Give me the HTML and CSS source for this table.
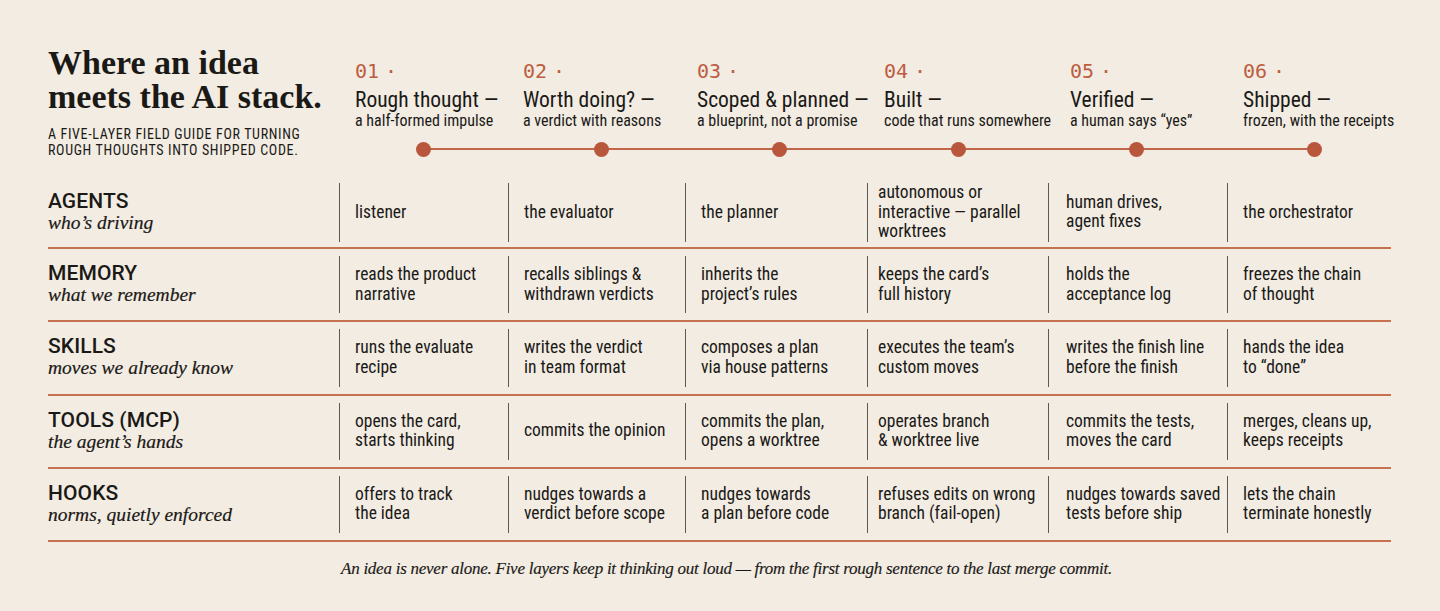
FILE: index.html
```html
<!DOCTYPE html>
<html lang="en">
<head>
<meta charset="utf-8">
<title>Where an idea meets the AI stack</title>
<link rel="stylesheet" href="styles.css">
</head>
<body>
<main class="page">
  <header class="top">
    <div class="intro">
      <h1 class="title">Where an idea<br>meets the AI stack.</h1>
      <p class="subtitle">A five-layer field guide for turning<br>rough thoughts into shipped code.</p>
    </div>
    <div class="stages-wrap">
      <div class="stages">
        <div class="stage"><div class="num">01 ·</div><div class="stage-title">Rough thought —</div><div class="stage-sub">a half-formed impulse</div></div>
        <div class="stage"><div class="num">02 ·</div><div class="stage-title">Worth doing? —</div><div class="stage-sub">a verdict with reasons</div></div>
        <div class="stage"><div class="num">03 ·</div><div class="stage-title">Scoped &amp; planned —</div><div class="stage-sub">a blueprint, not a promise</div></div>
        <div class="stage"><div class="num">04 ·</div><div class="stage-title">Built —</div><div class="stage-sub">code that runs somewhere</div></div>
        <div class="stage"><div class="num">05 ·</div><div class="stage-title">Verified —</div><div class="stage-sub">a human says “yes”</div></div>
        <div class="stage"><div class="num">06 ·</div><div class="stage-title">Shipped —</div><div class="stage-sub">frozen, with the receipts</div></div>
      </div>
      <div class="timeline">
        <span class="dot"></span><span class="dot"></span><span class="dot"></span><span class="dot"></span><span class="dot"></span><span class="dot"></span>
      </div>
    </div>
  </header>

  <section class="table">
    <div class="row">
      <div class="label"><div class="label-name">AGENTS</div><div class="label-sub">who’s driving</div></div>
      <div class="cell">listener</div>
      <div class="cell">the evaluator</div>
      <div class="cell">the planner</div>
      <div class="cell c4">autonomous or<br>interactive — parallel<br>worktrees</div>
      <div class="cell c5">human drives,<br>agent fixes</div>
      <div class="cell">the orchestrator</div>
    </div>
    <div class="row">
      <div class="label"><div class="label-name">MEMORY</div><div class="label-sub">what we remember</div></div>
      <div class="cell">reads the product<br>narrative</div>
      <div class="cell">recalls siblings &amp;<br>withdrawn verdicts</div>
      <div class="cell">inherits the<br>project’s rules</div>
      <div class="cell c4">keeps the card’s<br>full history</div>
      <div class="cell c5">holds the<br>acceptance log</div>
      <div class="cell">freezes the chain<br>of thought</div>
    </div>
    <div class="row">
      <div class="label"><div class="label-name">SKILLS</div><div class="label-sub">moves we already know</div></div>
      <div class="cell">runs the evaluate<br>recipe</div>
      <div class="cell">writes the verdict<br>in team format</div>
      <div class="cell">composes a plan<br>via house patterns</div>
      <div class="cell c4">executes the team’s<br>custom moves</div>
      <div class="cell c5">writes the finish line<br>before the finish</div>
      <div class="cell">hands the idea<br>to “done”</div>
    </div>
    <div class="row">
      <div class="label"><div class="label-name">TOOLS (MCP)</div><div class="label-sub">the agent’s hands</div></div>
      <div class="cell">opens the card,<br>starts thinking</div>
      <div class="cell">commits the opinion</div>
      <div class="cell">commits the plan,<br>opens a worktree</div>
      <div class="cell c4">operates branch<br>&amp; worktree live</div>
      <div class="cell c5">commits the tests,<br>moves the card</div>
      <div class="cell">merges, cleans up,<br>keeps receipts</div>
    </div>
    <div class="row">
      <div class="label"><div class="label-name">HOOKS</div><div class="label-sub">norms, quietly enforced</div></div>
      <div class="cell">offers to track<br>the idea</div>
      <div class="cell">nudges towards a<br>verdict before scope</div>
      <div class="cell">nudges towards<br>a plan before code</div>
      <div class="cell c4">refuses edits on wrong<br>branch (fail-open)</div>
      <div class="cell c5">nudges towards saved<br>tests before ship</div>
      <div class="cell">lets the chain<br>terminate honestly</div>
    </div>
  </section>

  <p class="footer">An idea is never alone. Five layers keep it thinking out loud — from the first rough sentence to the last merge commit.</p>
</main>
</body>
</html>
```

FILE: styles.css
```css
* { box-sizing: border-box; }

html, body {
  margin: 0;
  padding: 0;
  background: #f2ece3;
  color: #1b1916;
}

body {
  font-family: "Roboto Condensed", "Roboto", "Liberation Sans", sans-serif;
  font-stretch: condensed;
  width: 1440px;
  height: 611px;
  overflow: hidden;
}

.page {
  padding: 46px 49px 0 48px;
}

.top {
  display: grid;
  grid-template-columns: 307px 1fr;
}

.title {
  margin: 0;
  font-family: "Liberation Serif", "Times New Roman", serif;
  font-weight: 700;
  font-size: 34px;
  line-height: 34px;
  letter-spacing: 0;
  font-stretch: normal;
}

.subtitle {
  margin: 13px 0 0;
  font-size: 14px;
  line-height: 15.5px;
  text-transform: uppercase;
  letter-spacing: 0.65px;
}

.stages-wrap {
  padding-top: 13px;
}

.stages {
  display: grid;
  grid-template-columns: 168px 174px 187px 186px 173px 1fr;
}

.num {
  font-family: "DejaVu Sans Mono", "Liberation Mono", monospace;
  font-stretch: normal;
  font-size: 20px;
  line-height: 24px;
  word-spacing: -6px;
  color: #bd5d41;
}

.stage-title {
  margin-top: 6px;
  font-size: 21.5px;
  line-height: 22px;
  white-space: nowrap;
}

.stage-sub {
  font-size: 16px;
  line-height: 19px;
  white-space: nowrap;
}

.timeline {
  position: relative;
  display: flex;
  justify-content: space-between;
  width: 906px;
  margin: 12px 0 0 61px;
}

.timeline::before {
  content: "";
  position: absolute;
  left: 7px;
  right: 7px;
  top: 6px;
  height: 2px;
  background: #c0664b;
}

.dot {
  position: relative;
  width: 15px;
  height: 15px;
  border-radius: 50%;
  background: #b9573c;
}

.table {
  margin-top: 18px;
  width: 1343px;
}

.row {
  display: grid;
  grid-template-columns: 291px 169px 177px 182px 181px 179px 164px;
  height: 73.2px;
  border-bottom: 2px solid #c6714f;
}

.label {
  display: flex;
  flex-direction: column;
  justify-content: center;
  padding-bottom: 1px;
}

.label-name {
  font-family: "Roboto", "Liberation Sans", sans-serif;
  font-stretch: normal;
  font-weight: 500;
  font-size: 21px;
  line-height: 22px;
  letter-spacing: 0.1px;
}

.label-sub {
  font-family: "Liberation Serif", "Times New Roman", serif;
  font-stretch: normal;
  font-style: italic;
  font-size: 19.5px;
  line-height: 22px;
  -webkit-text-stroke: 0.2px #1b1916;
}

.cell {
  margin: 7px 0;
  border-left: 1px solid #5e5850;
  padding-left: 15px;
  display: flex;
  align-items: center;
  font-size: 17.5px;
  line-height: 19.5px;
  white-space: nowrap;
}

.cell.c4 { padding-left: 10px; }
.cell.c5 { padding-left: 17px; }

.footer {
  margin: 16px 0 0;
  padding-left: 14px;
  text-align: center;
  width: 1343px;
  font-family: "Liberation Serif", "Times New Roman", serif;
  font-stretch: normal;
  font-style: italic;
  font-size: 17px;
  letter-spacing: -0.25px;
  line-height: 22px;
  -webkit-text-stroke: 0.15px #1b1916;
}
```
